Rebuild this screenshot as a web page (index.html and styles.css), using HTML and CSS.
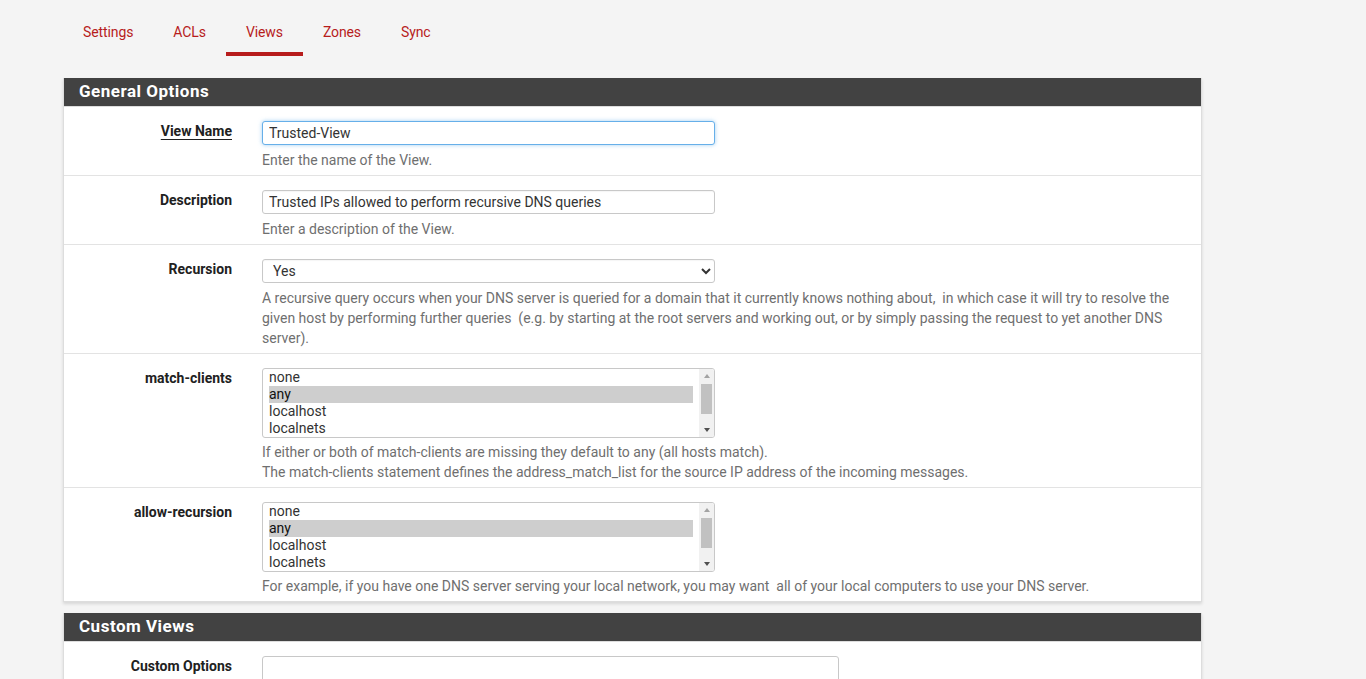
FILE: index.html
```html
<!DOCTYPE html>
<html>
<head>
<meta charset="utf-8">
<link rel="stylesheet" href="styles.css">
</head>
<body>
<div class="page">
  <nav class="tabs">
    <a class="tab">Settings</a>
    <a class="tab">ACLs</a>
    <a class="tab active">Views</a>
    <a class="tab">Zones</a>
    <a class="tab">Sync</a>
  </nav>

  <section class="panel">
    <h2 class="panel-heading">General Options</h2>
    <div class="panel-body">
      <div class="row">
        <label class="lbl required">View Name</label>
        <div class="field">
          <input class="input focused" type="text" value="Trusted-View">
          <div class="help">Enter the name of the View.</div>
        </div>
      </div>
      <div class="row">
        <label class="lbl">Description</label>
        <div class="field">
          <input class="input" type="text" value="Trusted IPs allowed to perform recursive DNS queries">
          <div class="help">Enter a description of the View.</div>
        </div>
      </div>
      <div class="row">
        <label class="lbl">Recursion</label>
        <div class="field">
          <select class="input select"><option>Yes</option><option>No</option></select>
          <div class="help">A recursive query occurs when your DNS server is queried for a domain that it currently knows nothing about,&nbsp; in which case it will try to resolve the given host by performing further queries&nbsp; (e.g. by starting at the root servers and working out, or by simply passing the request to yet another DNS server).</div>
        </div>
      </div>
      <div class="row">
        <label class="lbl">match-clients</label>
        <div class="field">
          <div class="listbox" role="listbox" aria-multiselectable="true">
            <ul class="options">
              <li>none</li>
              <li class="sel">any</li>
              <li>localhost</li>
              <li>localnets</li>
            </ul>
            <div class="scrollbar">
              <span class="arrow up"></span>
              <span class="track"><span class="thumb"></span></span>
              <span class="arrow down"></span>
            </div>
          </div>
          <div class="help">If either or both of match-clients are missing they default to any (all hosts match).<br>The match-clients statement defines the address_match_list for the source IP address of the incoming messages.</div>
        </div>
      </div>
      <div class="row">
        <label class="lbl">allow-recursion</label>
        <div class="field">
          <div class="listbox" role="listbox" aria-multiselectable="true">
            <ul class="options">
              <li>none</li>
              <li class="sel">any</li>
              <li>localhost</li>
              <li>localnets</li>
            </ul>
            <div class="scrollbar">
              <span class="arrow up"></span>
              <span class="track"><span class="thumb"></span></span>
              <span class="arrow down"></span>
            </div>
          </div>
          <div class="help">For example, if you have one DNS server serving your local network, you may want&nbsp; all of your local computers to use your DNS server.</div>
        </div>
      </div>
    </div>
  </section>

  <section class="panel">
    <h2 class="panel-heading">Custom Views</h2>
    <div class="panel-body">
      <div class="row">
        <label class="lbl">Custom Options</label>
        <div class="field">
          <textarea class="textarea" rows="5"></textarea>
        </div>
      </div>
    </div>
  </section>
</div>
</body>
</html>
```

FILE: styles.css
```css
html, body {
  margin: 0;
  padding: 0;
  background: #f4f4f4;
  font-family: Roboto, "Liberation Sans", sans-serif;
  font-size: 14px;
  color: #212121;
}

.page {
  margin-left: 63px;
  width: 1139px;
}

.tabs {
  display: flex;
  padding-top: 20px;
  margin-bottom: 22px;
}

.tab {
  display: block;
  padding: 3px 20px 0;
  height: 29px;
  line-height: 18px;
  font-size: 14px;
  letter-spacing: -0.1px;
  color: #b71c1c;
  border-bottom: 4px solid transparent;
  cursor: pointer;
}

.tab.active {
  border-bottom-color: #b71c1c;
}

.panel {
  background: #fff;
  border: 1px solid #ddd;
  border-top: none;
  box-shadow: 0 2px 3px rgba(0, 0, 0, 0.12);
  margin-bottom: 11px;
}

.panel-heading {
  margin: 0;
  height: 28px;
  line-height: 27px;
  background: #424242;
  color: #fff;
  font-size: 17px;
  font-weight: 700;
  padding: 0 15px;
  letter-spacing: 0.5px;
  border-bottom: 1px solid #ddd;
}

.row {
  display: flex;
  padding: 14px 0 5px;
  border-bottom: 1px solid #e3e3e3;
}

.row:last-child {
  border-bottom: none;
}

.lbl {
  width: 183px;
  flex: none;
  box-sizing: border-box;
  padding: 2px 15px 0 0;
  text-align: right;
  font-weight: 700;
  color: #212121;
}

.lbl.required {
  text-decoration: underline;
  text-underline-offset: 3px;
}

.field {
  flex: 1;
  padding: 0 15px;
}

.input {
  display: block;
  box-sizing: border-box;
  width: 453px;
  height: 24px;
  border: 1px solid #c8c8c8;
  border-radius: 3px;
  padding: 0 6px;
  font-family: Roboto, "Liberation Sans", sans-serif;
  font-size: 14px;
  color: #333;
  background: #fff;
  box-shadow: inset 0 1px 1px rgba(0, 0, 0, 0.04);
}

.input.focused {
  border-color: #66afe9;
  box-shadow: 0 0 4px rgba(102, 175, 233, 0.6);
  outline: none;
}

.select {
  padding: 0 6px 0 6px;
}

.help {
  margin-top: 5px;
  line-height: 20px;
  color: #6f6f6f;
  font-size: 14px;
  max-width: 915px;
}

.listbox {
  display: flex;
  box-sizing: border-box;
  width: 453px;
  height: 70px;
  border: 1px solid #c8c8c8;
  border-radius: 3px;
  background: #fff;
  overflow: hidden;
}

.options {
  flex: 1;
  list-style: none;
  margin: 0;
  padding: 0 6px;
  overflow: hidden;
  color: #333;
}

.options li {
  height: 17px;
  line-height: 17px;
  padding: 0;
  white-space: nowrap;
}

.options li.sel {
  background: #cecece;
  color: #111;
}

.scrollbar {
  width: 15px;
  flex: none;
  display: flex;
  flex-direction: column;
  background: #f1f1f1;
}

.arrow {
  height: 14px;
  flex: none;
  display: flex;
  align-items: center;
  justify-content: center;
}

.arrow::before {
  content: "";
  width: 0;
  height: 0;
  border-left: 3.5px solid transparent;
  border-right: 3.5px solid transparent;
}

.arrow.up::before {
  border-bottom: 4px solid #a3a3a3;
}

.arrow.down::before {
  border-top: 4px solid #505050;
}

.track {
  flex: 1;
  display: block;
  padding: 1px 2px;
}

.thumb {
  display: block;
  height: 30px;
  background: #c1c1c1;
}

.listbox + .help {
  margin-top: 4px;
}

.textarea {
  display: block;
  box-sizing: border-box;
  width: 577px;
  height: 100px;
  border: 1px solid #c8c8c8;
  border-radius: 3px;
  resize: none;
}
```
